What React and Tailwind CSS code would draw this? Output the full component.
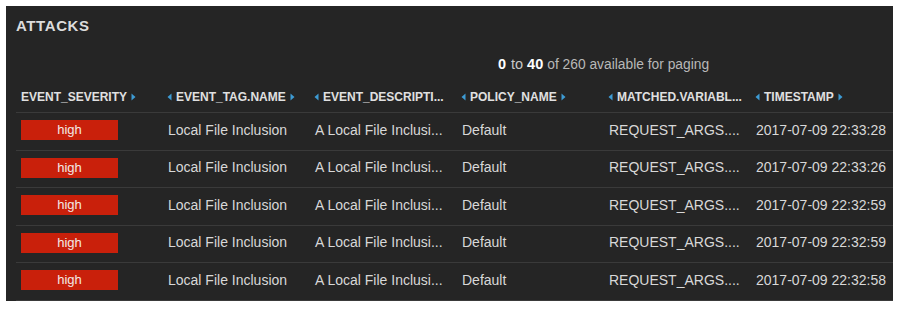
import React from "react";

const rows = [
  "2017-07-09 22:33:28",
  "2017-07-09 22:33:26",
  "2017-07-09 22:32:59",
  "2017-07-09 22:32:59",
  "2017-07-09 22:32:58",
];

const Left = () => (
  <svg width="5" height="8" viewBox="0 0 5 8" className="shrink-0">
    <path d="M4.5 0.5 L0.5 4 L4.5 7.5 Z" fill="#3d9bd4" />
  </svg>
);

const Right = () => (
  <svg width="5" height="8" viewBox="0 0 5 8" className="shrink-0">
    <path d="M0.5 0.5 L4.5 4 L0.5 7.5 Z" fill="#3d9bd4" />
  </svg>
);

function Head({ label, left = true, right = false }) {
  return (
    <div className={`flex items-center ${left ? "pl-[4px]" : "pl-[5px]"}`}>
      {left && <Left />}
      <span className={left ? "ml-[4px]" : ""}>{label}</span>
      {right && (
        <span className="ml-[4px] flex">
          <Right />
        </span>
      )}
    </div>
  );
}

const grid = "grid grid-cols-[147px_147px_147px_147px_147px_1fr]";

export default function App() {
  return (
    <div className="w-[904px] h-[311px] bg-white p-[6px] font-['Liberation_Sans',Arial,sans-serif]">
      <div className="w-[887px] h-[295px] bg-[#252525] pl-[10px] pt-[10px]">
        <div className="h-[20px] leading-[20px] text-[15px] font-bold tracking-[0.6px] text-[#dcdcdc]">
          ATTACKS
        </div>
        <div className="mt-[19px] h-[20px] flex items-center justify-center pl-[298px] whitespace-nowrap">
          <span className="text-[14.5px] font-bold text-white">0</span>
          <span className="text-[14.5px] text-[#c8c8c8] ml-[5px]">to</span>
          <span className="text-[14.5px] font-bold text-white ml-[4px]">40</span>
          <span className="text-[13.8px] text-[#b8b8b8] ml-[4px]">of 260 available for paging</span>
        </div>
        <div className={`${grid} h-[38px] items-end pb-[7px] border-b border-[#3a3a3a] text-[12px] leading-[16px] font-bold text-[#e0e0e0] whitespace-nowrap`}>
          <Head label="EVENT_SEVERITY" left={false} right />
          <Head label="EVENT_TAG.NAME" right />
          <Head label="EVENT_DESCRIPTI..." />
          <Head label="POLICY_NAME" right />
          <Head label="MATCHED.VARIABL..." />
          <Head label="TIMESTAMP" right />
        </div>
        {rows.map((ts, i) => (
          <div
            key={i}
            className={`${grid} h-[37.5px] items-center pb-[2px] border-b border-[#3a3a3a] text-[14px] text-[#d8d8d8] whitespace-nowrap`}
          >
            <div className="pl-[5px]">
              <div className="w-[97px] h-[20px] bg-[#c9200b] text-[13px] leading-[20px] text-center text-[#f4e8e6]">
                high
              </div>
            </div>
            <div className="pl-[5px]">Local File Inclusion</div>
            <div className="pl-[5px]">A Local File Inclusi...</div>
            <div className="pl-[5px]">Default</div>
            <div className="pl-[5px]">REQUEST_ARGS....</div>
            <div className="pl-[5px]">{ts}</div>
          </div>
        ))}
      </div>
    </div>
  );
}
